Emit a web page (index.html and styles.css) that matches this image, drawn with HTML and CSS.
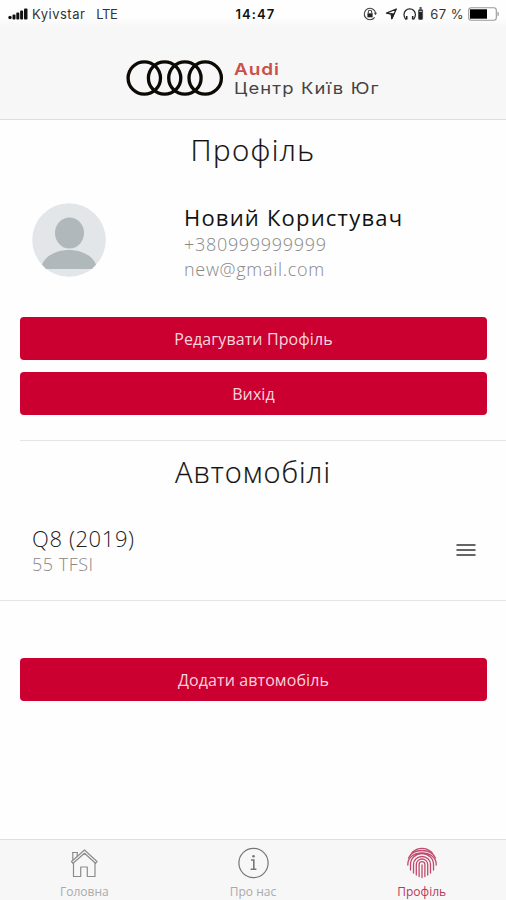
FILE: index.html
```html
<!DOCTYPE html>
<html lang="uk">
<head>
    <meta charset="UTF-8">
    <meta name="viewport" content="width=device-width, initial-scale=1.0">
    <title>Профіль</title>
    <link rel="stylesheet" href="styles.css">
</head>
<body>

    <header>
        <div class="status">
            <div class="status-left">
                <svg width="20" height="12" viewBox="0 0 20 12" fill="#111">
                    <circle cx="2" cy="9.5" r="1.7"/>
                    <rect x="4.5" y="6.5" width="3" height="5" rx="1"/>
                    <rect x="8.3" y="4.5" width="3" height="7" rx="1"/>
                    <rect x="12.1" y="2.5" width="3" height="9" rx="1"/>
                    <rect x="16" y="0.5" width="3.5" height="11" rx="1"/>
                </svg>
                <span class="carrier">Kyivstar</span>
                <span class="network">LTE</span>
            </div>
            <div class="time">14:47</div>
            <div class="status-right">
                <svg width="14" height="14" viewBox="0 0 14 14" fill="none" stroke="#444" stroke-width="1.1">
                    <path d="M11.6 10.4A5.7 5.7 0 1 1 12.6 6"/>
                    <path d="M10.9 5.7h3.1l-1.5 2.5z" fill="#444" stroke="none"/>
                    <rect x="4.4" y="6.3" width="5.2" height="4" fill="#222" stroke="none"/>
                    <path d="M5.3 6.4V5a1.7 1.7 0 0 1 3.4 0v1.4"/>
                </svg>
                <svg class="arrow" width="13" height="12" viewBox="0 0 13 12" fill="none" stroke="#222" stroke-width="1.3" stroke-linejoin="round">
                    <path d="M11.3 1L1.5 5.2l4.8.8.6 4.6z"/>
                    <path d="M6.3 6l.6 4.6 1.9-4.600z" fill="#222"/>
                </svg>
                <svg class="headphones" width="22" height="14" viewBox="0 0 22 14" fill="none" stroke="#222" stroke-width="1.2">
                    <path d="M3.2 12.2h-.6C1.6 11 1 9.2 1 7.5a5.7 5.7 0 0 1 11.4 0c0 1.7-.6 3.5-1.6 4.7h-.6"/>
                    <path d="M3.7 9v3.5M9.7 9v3.5" stroke-width="1.6"/>
                    <rect x="15.6" y="2.5" width="4" height="10" rx="1" fill="#222" stroke="#555" stroke-width="1"/>
                    <path d="M16.5 1h2.2" stroke-width="1.5"/>
                    <path d="M16.2 4.3h2.8" stroke="#ccc" stroke-width="1"/>
                </svg>
                <span class="percent">67 %</span>
                <svg width="32" height="14" viewBox="0 0 32 14">
                    <rect x="0.7" y="0.7" width="27.6" height="12.6" rx="2.5" fill="#fff" stroke="#999" stroke-width="1.1"/>
                    <rect x="2" y="2.3" width="17" height="9.4" fill="#000"/>
                    <path d="M29.5 4.5c1.8.8 1.8 4.2 0 5z" fill="#999"/>
                </svg>
            </div>
        </div>
        <div class="brand">
            <svg width="98" height="38" viewBox="0 0 98 38" fill="none" stroke="#0d0a06" stroke-width="3.3">
                <circle cx="18.3" cy="19" r="16.2"/>
                <circle cx="38.6" cy="19" r="16.2"/>
                <circle cx="58.9" cy="19" r="16.2"/>
                <circle cx="79.2" cy="19" r="16.2"/>
            </svg>
            <div class="brand-text">
                <div class="brand-name">Audi</div>
                <div class="brand-center">Центр Київ Юг</div>
            </div>
        </div>
    </header>

    <main>
        <h1>Профіль</h1>
        <div class="user">
            <svg width="74" height="74" viewBox="0 0 74 74">
                <circle cx="37" cy="37" r="36.8" fill="#e2e6e9"/>
                <ellipse cx="37.5" cy="30" rx="14.5" ry="15.5" fill="#b0b8bc"/>
                <path d="M10 61.5C18 42 56 42 64 61.5L60 66H14z" fill="#b0b8bc"/>
            </svg>
            <div class="user-info">
                <div class="user-name">Новий Користувач</div>
                <div class="user-phone">+380999999999</div>
                <div class="user-email">new@gmail.com</div>
            </div>
        </div>
        <button>Редагувати Профіль</button>
        <button>Вихід</button>

        <h1 class="cars-title">Автомобілі</h1>
        <div class="car">
            <div>
                <div class="car-name">Q8 (2019)</div>
                <div class="car-engine">55 TFSI</div>
            </div>
            <svg width="20" height="14" viewBox="0 0 20 14" stroke="#333" stroke-width="1.7">
                <path d="M0.5 2h19M0.5 7h19M0.5 12h19"/>
            </svg>
        </div>
        <button class="add">Додати автомобіль</button>
    </main>

    <nav>
        <a class="tab">
            <svg width="32" height="32" viewBox="0 0 32 32" fill="none" stroke="#8c8c8c" stroke-width="1.2" stroke-linejoin="round">
                <path d="M3.5 14.5L16.5 3 29 14.5l-1.5 1.8-11-10L5 16.3z"/>
                <path d="M4.8 13V5.5h4.4v3.8M4 5.5h6"/>
                <path d="M5.5 16v13.5h7.2V20h6.6v9.5H27V16"/>
            </svg>
            <span>Головна</span>
        </a>
        <a class="tab">
            <svg width="32" height="32" viewBox="0 0 32 32" fill="none" stroke="#777" stroke-width="1.2">
                <circle cx="16.5" cy="16" r="14.6"/>
                <path d="M14 13h2.8v9.3M13.6 22.3h5.8" stroke-width="1.6"/>
                <circle cx="16.5" cy="9.3" r="1.3" fill="#777" stroke="none"/>
            </svg>
            <span>Про нас</span>
        </a>
        <a class="tab active">
            <svg width="32" height="32" viewBox="0 0 32 32" fill="none" stroke="#c04a6c" stroke-width="1.3" stroke-linecap="round">
                <path d="M6 5.5C12 0 20 0 26 5.5"/>
                <path d="M2.5 11C7 1 25 1 29.5 11"/>
                <path d="M1.8 18C1 2 31 2 30.2 18"/>
                <path d="M4.5 23v-5.5a11.5 11 0 0 1 23 0V23"/>
                <path d="M7.5 26v-8.5a8.500 8 0 0 1 17 0V26"/>
                <path d="M10.3 28V17.5a5.7 5.5 0 0 1 11.4 0V28"/>
                <path d="M13.1 29.5v-12a2.9 2.9 0 0 1 5.8 0v12"/>
                <path d="M16 18v12.5"/>
            </svg>
            <span>Профіль</span>
        </a>
    </nav>

</body>
</html>
```
FILE: styles.css
```css
* { box-sizing: border-box; }
body { font-family: "Open Sans", "Noto Sans", sans-serif; font-weight: 300; margin: 0; height: 900px; display: flex; flex-direction: column; background: #fefefe; color: #111; white-space: nowrap; overflow: hidden; }

header { height: 120px; background: #f7f7f7; border-bottom: 1px solid #dedede; }
.status { height: 27px; padding: 0 6px 0 8px; display: grid; grid-template-columns: 1fr 60px 1fr; align-items: center; background: linear-gradient(#fefefe 60%, #f7f7f7); font-family: Inter, sans-serif; font-weight: 400; font-size: 13px; color: #333; }
.status-left, .status-right { display: flex; align-items: center; }
.status-right { justify-content: flex-end; }
.carrier { margin-left: 4px; letter-spacing: 0.5px; }
.network { margin-left: 11px; letter-spacing: -0.4px; }
.time { padding-left: 3px; text-align: center; font-weight: 600; letter-spacing: 1.1px; color: #111; }
.arrow { margin-left: 8px; }
.headphones { margin-left: 5px; }
.percent { margin: 0 4px 0 5px; letter-spacing: 0.5px; }

.brand { display: flex; align-items: flex-start; padding: 32px 0 0 126px; }
.brand-text { font-family: Inter, sans-serif; margin-left: 10px; padding-top: 1px; transform: scaleX(1.15); transform-origin: left; }
.brand-name { font-size: 16.5px; line-height: 19px; font-weight: 600; letter-spacing: 0.8px; color: #c9504c; }
.brand-center { font-size: 16px; line-height: 19px; font-weight: 400; letter-spacing: 1px; color: #444; }

main { flex: 1; }
h1 { margin: 0; font-size: 29.5px; line-height: 40px; font-weight: 300; letter-spacing: 1.4px; text-align: center; padding-top: 10px; -webkit-text-stroke: 0.2px; }
.user { display: flex; padding: 33px 0 0 32px; height: 147px; }
.user-info { margin-left: 78px; }
.user-name { font-size: 22px; line-height: 28px; font-weight: 400; letter-spacing: 1.2px; }
.user-phone, .user-email { font-size: 18px; line-height: 25px; letter-spacing: 0.7px; color: #888; }
.user-phone { padding-top: 1px; }
button { display: block; width: 467px; height: 43px; margin: 0 0 12px 20px; padding: 0; border: 0; border-radius: 4px; background: #cb0030; color: #f8d5dd; font-family: inherit; font-size: 16px; font-weight: 400; letter-spacing: 0.1px; }
.cars-title { margin: 25px 0 0 20px; padding: 11px 20px 0 0; border-top: 1px solid #e4e4e4; font-size: 29px; letter-spacing: 1px; }
.car { display: flex; justify-content: space-between; align-items: center; height: 109px; padding: 7px 30px 0 32px; border-bottom: 1px solid #e4e4e4; }
.car-name { font-size: 22px; line-height: 28px; letter-spacing: 0.6px; color: #222; }
.car-engine { font-size: 18px; line-height: 24px; letter-spacing: 0.5px; color: #888; }
.add { margin-top: 57px; }

nav { height: 61px; display: flex; background: #f7f7f7; border-top: 1px solid #dedede; }
.tab { flex: 1; display: flex; flex-direction: column; align-items: center; padding-top: 7px; font-size: 12px; line-height: 16px; font-weight: 400; color: #aaa; }
.tab span { margin-top: 5px; }
.active { color: #b9375c; }
```
